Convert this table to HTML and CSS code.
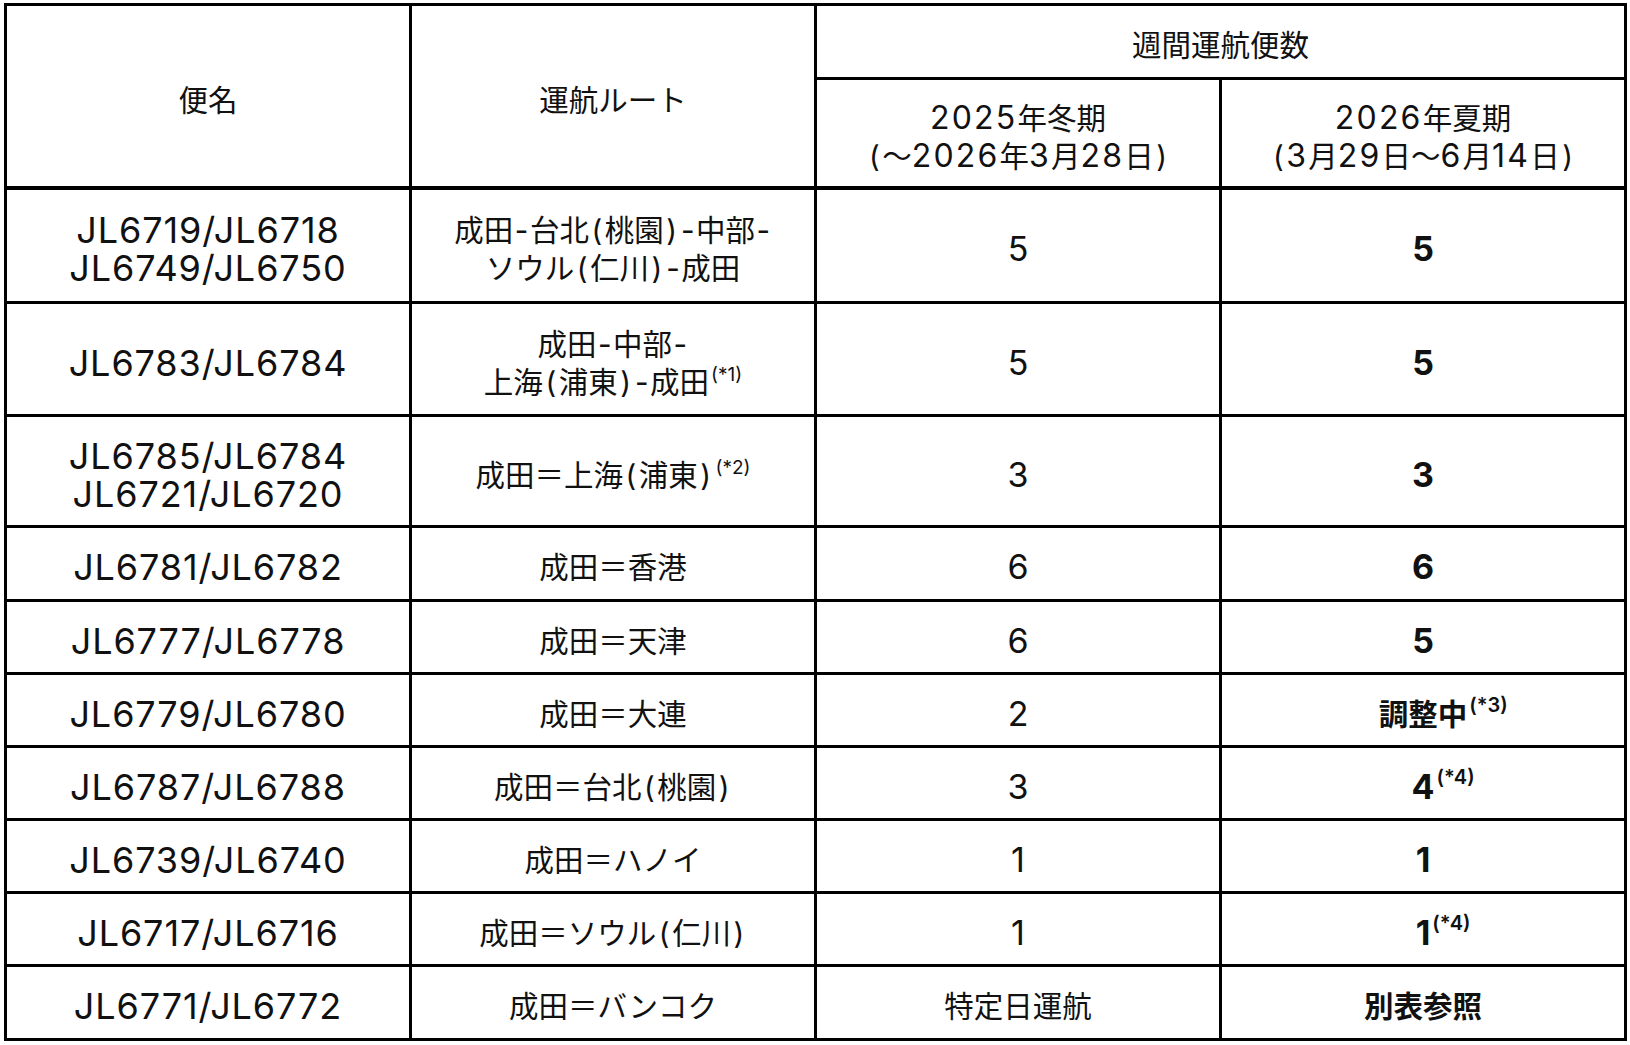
FILE: index.html
```html
<!DOCTYPE html>
<html lang="ja">
<head>
<meta charset="utf-8">
<title>週間運航便数</title>
<link rel="stylesheet" href="styles.css">
</head>
<body>
<table class="sched">
  <colgroup><col><col><col><col></colgroup>
  <thead>
    <tr class="h1">
      <th rowspan="2" class="hb">便名</th>
      <th rowspan="2" class="hb">運航ルート</th>
      <th colspan="2">週間運航便数</th>
    </tr>
    <tr class="h2">
      <th class="hb"><span class="d">2025</span>年冬期<br><span class="p">(</span>～<span class="d">2026</span>年<span class="d">3</span>月<span class="d">28</span>日<span class="p">)</span></th>
      <th class="hb"><span class="d">2026</span>年夏期<br><span class="p">(</span><span class="d">3</span>月<span class="d">29</span>日～<span class="d">6</span>月<span class="d">14</span>日<span class="p">)</span></th>
    </tr>
  </thead>
  <tbody>
    <tr class="r114">
      <td class="fl">JL6719/JL6718<br>JL6749/JL6750</td>
      <td class="rt">成田<span class="hy">-</span>台北<span class="p">(</span>桃園<span class="p">)</span><span class="hy">-</span>中部<span class="hy">-</span><br>ソウル<span class="p">(</span>仁川<span class="p">)</span><span class="hy">-</span>成田</td>
      <td class="n">5</td>
      <td class="n b">5</td>
    </tr>
    <tr class="r113">
      <td class="fl">JL6783/JL6784</td>
      <td class="rt">成田<span class="hy">-</span>中部<span class="hy">-</span><br>上海<span class="p">(</span>浦東<span class="p">)</span><span class="hy">-</span>成田<sup class="nt">(*1)</sup></td>
      <td class="n">5</td>
      <td class="n b">5</td>
    </tr>
    <tr class="r111">
      <td class="fl">JL6785/JL6784<br>JL6721/JL6720</td>
      <td class="rt">成田＝上海<span class="p">(</span>浦東<span class="p">)</span><sup class="nt">(*2)</sup></td>
      <td class="n">3</td>
      <td class="n b">3</td>
    </tr>
    <tr class="r74">
      <td class="fl">JL6781/JL6782</td>
      <td class="rt">成田＝香港</td>
      <td class="n">6</td>
      <td class="n b">6</td>
    </tr>
    <tr class="r73">
      <td class="fl">JL6777/JL6778</td>
      <td class="rt">成田＝天津</td>
      <td class="n">6</td>
      <td class="n b">5</td>
    </tr>
    <tr class="r73">
      <td class="fl">JL6779/JL6780</td>
      <td class="rt">成田＝大連</td>
      <td class="n">2</td>
      <td class="rt b"><span class="val">調整中<span class="hang">(*3)</span></span></td>
    </tr>
    <tr class="r73">
      <td class="fl">JL6787/JL6788</td>
      <td class="rt">成田＝台北<span class="p">(</span>桃園<span class="p">)</span></td>
      <td class="n">3</td>
      <td class="n b"><span class="val">4<span class="hang">(*4)</span></span></td>
    </tr>
    <tr class="r73">
      <td class="fl">JL6739/JL6740</td>
      <td class="rt">成田＝ハノイ</td>
      <td class="n">1</td>
      <td class="n b">1</td>
    </tr>
    <tr class="r73">
      <td class="fl">JL6717/JL6716</td>
      <td class="rt">成田＝ソウル<span class="p">(</span>仁川<span class="p">)</span></td>
      <td class="n">1</td>
      <td class="n b"><span class="val">1<span class="hang">(*4)</span></span></td>
    </tr>
    <tr class="r74">
      <td class="fl">JL6771/JL6772</td>
      <td class="rt">成田＝バンコク</td>
      <td class="rt">特定日運航</td>
      <td class="rt b">別表参照</td>
    </tr>
  </tbody>
</table>
</body>
</html>
```

FILE: styles.css
```css
html, body {
  margin: 0;
  padding: 0;
  background: #ffffff;
}

body {
  padding: 3px 0 0 4px;
}

.sched {
  border-collapse: separate;
  border-spacing: 0;
  table-layout: fixed;
  width: 1623px;
  border-top: 3px solid #000;
  border-left: 3px solid #000;
  font-family: "Inter", "Noto Sans CJK JP", sans-serif;
  color: #111;
}

.sched th,
.sched td {
  border-right: 3px solid #000;
  border-bottom: 3px solid #000;
  padding: 7px 0 0 0;
  text-align: center;
  vertical-align: middle;
  font-weight: 400;
  font-size: 29.5px;
  line-height: 38px;
  white-space: nowrap;
}

.sched th.hb {
  border-bottom-width: 4px;
}

.h1 { height: 74px; }
.h2 { height: 110px; }
.r114 { height: 114px; }
.r113 { height: 113px; }
.r111 { height: 111px; }
.r74 { height: 74px; }
.r73 { height: 73px; }

.d {
  font-size: 32px;
  letter-spacing: 2.2px;
}

.p {
  margin: 0 2.5px;
}

.hy {
  margin: 0 1.5px;
}

.sched td.fl {
  font-size: 36px;
  letter-spacing: 0.9px;
  line-height: 38px;
}

.sched td.n {
  font-size: 34px;
}

.sched td.b {
  font-weight: 700;
}

.nt {
  font-size: 19px;
  line-height: 0;
  vertical-align: baseline;
  position: relative;
  top: -12px;
  margin-left: 2px;
}

.val {
  position: relative;
}

.hang {
  position: absolute;
  left: 100%;
  top: -1px;
  margin-left: 2px;
  font-size: 20px;
  font-weight: 600;
  line-height: 20px;
  white-space: nowrap;
}

.n .hang {
  top: 1px;
}
```
